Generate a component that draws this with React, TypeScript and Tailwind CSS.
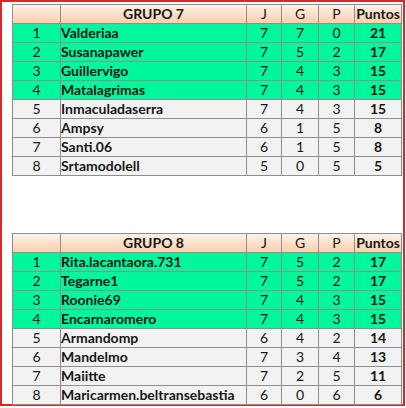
type Row = [number, string, number, number, number, number];

const grupo7: Row[] = [
  [1, "Valderiaa", 7, 7, 0, 21],
  [2, "Susanapawer", 7, 5, 2, 17],
  [3, "Guillervigo", 7, 4, 3, 15],
  [4, "Matalagrimas", 7, 4, 3, 15],
  [5, "Inmaculadaserra", 7, 4, 3, 15],
  [6, "Ampsy", 6, 1, 5, 8],
  [7, "Santi.06", 6, 1, 5, 8],
  [8, "Srtamodolell", 5, 0, 5, 5],
];

const grupo8: Row[] = [
  [1, "Rita.lacantaora.731", 7, 5, 2, 17],
  [2, "Tegarne1", 7, 5, 2, 17],
  [3, "Roonie69", 7, 4, 3, 15],
  [4, "Encarnaromero", 7, 4, 3, 15],
  [5, "Armandomp", 6, 4, 2, 14],
  [6, "Mandelmo", 7, 3, 4, 13],
  [7, "Maiitte", 7, 2, 5, 11],
  [8, "Maricarmen.beltransebastia", 6, 0, 6, 6],
];

const GroupTable = ({ title, rows }: { title: string; rows: Row[] }) => {
  return (
    <table className="table-fixed border-collapse w-[389px] text-[14px] leading-none text-[#161616] [&_td]:border [&_td]:border-[#8e8e8e] [&_td]:h-[19px] [&_td]:p-0">
      <colgroup>
        <col className="w-[48px]" />
        <col className="w-[186px]" />
        <col className="w-[35px]" />
        <col className="w-[37px]" />
        <col className="w-[36px]" />
        <col className="w-[47px]" />
      </colgroup>
      <tbody>
        <tr className="bg-gradient-to-b from-[#fdf1e8] to-[#fbcea7]">
          <td></td>
          <td className="text-center font-bold">{title}</td>
          <td className="text-center">J</td>
          <td className="text-center">G</td>
          <td className="text-center">P</td>
          <td className="text-center font-bold">Puntos</td>
        </tr>
        {rows.map(([pos, name, j, g, p, pts]) => (
          <tr key={pos} className={pos <= 4 ? "bg-[#00f79b]" : "bg-[#f2f2f2]"}>
            <td className="text-center">{pos}</td>
            <td className="pl-[3px] font-bold whitespace-nowrap">{name}</td>
            <td className="text-center">{j}</td>
            <td className="text-center">{g}</td>
            <td className="text-center">{p}</td>
            <td className="text-center font-bold">{pts}</td>
          </tr>
        ))}
      </tbody>
    </table>
  );
};

export default function App() {
  return (
    <div className="w-[406px] h-[408px] bg-white font-['Lato','Open_Sans',sans-serif]">
      <div className="w-[405px] h-[406px] border-2 border-[#d42a2a] pt-[2px] pl-[10px] flex flex-col gap-[57px]">
        <GroupTable title="GRUPO 7" rows={grupo7} />
        <GroupTable title="GRUPO 8" rows={grupo8} />
      </div>
    </div>
  );
}
